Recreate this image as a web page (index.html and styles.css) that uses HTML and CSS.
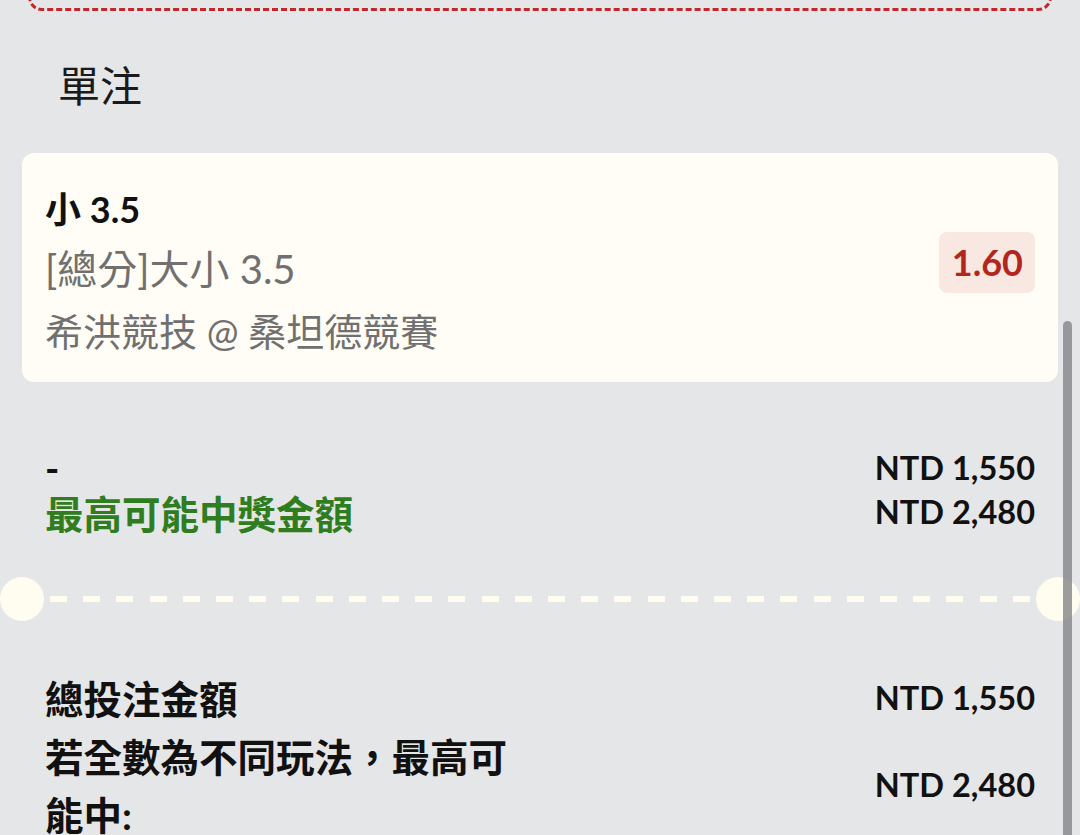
FILE: index.html
```html
<!DOCTYPE html>
<html lang="zh-Hant">
<head>
<meta charset="utf-8">
<title>單注</title>
<link rel="stylesheet" href="styles.css">
</head>
<body>
<div class="page">
  <div class="prev-box"></div>
  <h2 class="heading">單注</h2>

  <div class="bet-card">
    <div class="bet-info">
      <div class="bet-title">小 3.5</div>
      <div class="bet-market">[總分]大小 3.5</div>
      <div class="bet-match">希洪競技 @ 桑坦德競賽</div>
    </div>
    <div class="odds">1.60</div>
  </div>

  <div class="summary">
    <div class="summary-labels">
      <div class="line">-</div>
      <div class="line green">最高可能中獎金額</div>
    </div>
    <div class="summary-values">
      <div class="line">NTD 1,550</div>
      <div class="line">NTD 2,480</div>
    </div>
  </div>

  <div class="divider"></div>

  <div class="totals">
    <div class="total-row">
      <div class="total-label">總投注金額</div>
      <div class="total-value">NTD 1,550</div>
    </div>
    <div class="total-row">
      <div class="total-label">若全數為不同玩法，最高可能中:</div>
      <div class="total-value">NTD 2,480</div>
    </div>
  </div>
</div>
<div class="scrollbar"></div>
</body>
</html>
```

FILE: styles.css
```css
html, body {
  margin: 0;
  padding: 0;
}
body {
  background: #e5e6e8;
  height: 835px;
  overflow: hidden;
  font-family: Lato, "Noto Sans CJK TC", sans-serif;
  color: #111;
  position: relative;
}
.page {
  padding: 0 22px;
}
.prev-box {
  height: 100px;
  margin: -89px 6px 0;
  border: 3px dashed #c1272d;
  border-top: none;
  border-radius: 0 0 14px 14px;
  box-sizing: border-box;
}
.heading {
  margin: 43px 0 0 36px;
  font-size: 42px;
  line-height: 60px;
  font-weight: 400;
  color: #1a1a1a;
  font-family: "Noto Sans CJK TC", sans-serif;
}
.bet-card {
  margin-top: 39px;
  background: #fffdf5;
  border-radius: 12px;
  padding: 26px 23px 19px;
  display: flex;
  align-items: center;
  justify-content: space-between;
}
.bet-title {
  font-size: 36px;
  font-weight: 700;
  line-height: 60px;
  color: #111;
}
.bet-market {
  font-size: 40px;
  line-height: 60px;
  color: #707070;
}
.bet-match {
  font-size: 38px;
  line-height: 64px;
  color: #707070;
}
.odds {
  background: #f8e8e1;
  color: #b3261e;
  font-weight: 700;
  font-size: 36px;
  line-height: 61px;
  padding: 0 12px 0 13px;
  border-radius: 8px;
  margin-bottom: 17px;
}
.summary {
  margin-top: 63px;
  padding: 0 23px;
  display: flex;
  justify-content: space-between;
  align-items: flex-start;
}
.summary-labels .line {
  font-size: 38.5px;
  font-weight: 700;
  line-height: 46px;
}
.green {
  color: #2f7d1f;
}
.summary-values {
  text-align: right;
  padding-top: 1px;
}
.summary-values .line {
  font-size: 32.5px;
  font-weight: 700;
  line-height: 44px;
}
.divider {
  position: relative;
  margin-top: 59px;
  height: 6px;
  background: repeating-linear-gradient(to right, #fffdf0 0, #fffdf0 17px, transparent 17px, transparent 33.2px);
  background-size: 981px 6px;
  background-position: 28px 0;
  background-repeat: no-repeat;
}
.divider::before,
.divider::after {
  content: "";
  position: absolute;
  top: -19px;
  width: 44px;
  height: 44px;
  border-radius: 50%;
  background: #fffdf0;
}
.divider::before {
  left: -22px;
}
.divider::after {
  right: -22px;
}
.totals {
  margin-top: 68px;
  padding: 0 23px;
}
.total-row {
  display: flex;
  justify-content: space-between;
  align-items: center;
}
.total-label {
  width: 490px;
  font-size: 38.5px;
  font-weight: 700;
  line-height: 58px;
}
.total-value {
  font-size: 32.5px;
  font-weight: 700;
  line-height: 44px;
  padding-bottom: 2px;
}
.scrollbar {
  position: absolute;
  left: 1063px;
  top: 321px;
  width: 9px;
  height: 600px;
  border-radius: 5px;
  background: rgba(130, 130, 134, 0.78);
}
```
